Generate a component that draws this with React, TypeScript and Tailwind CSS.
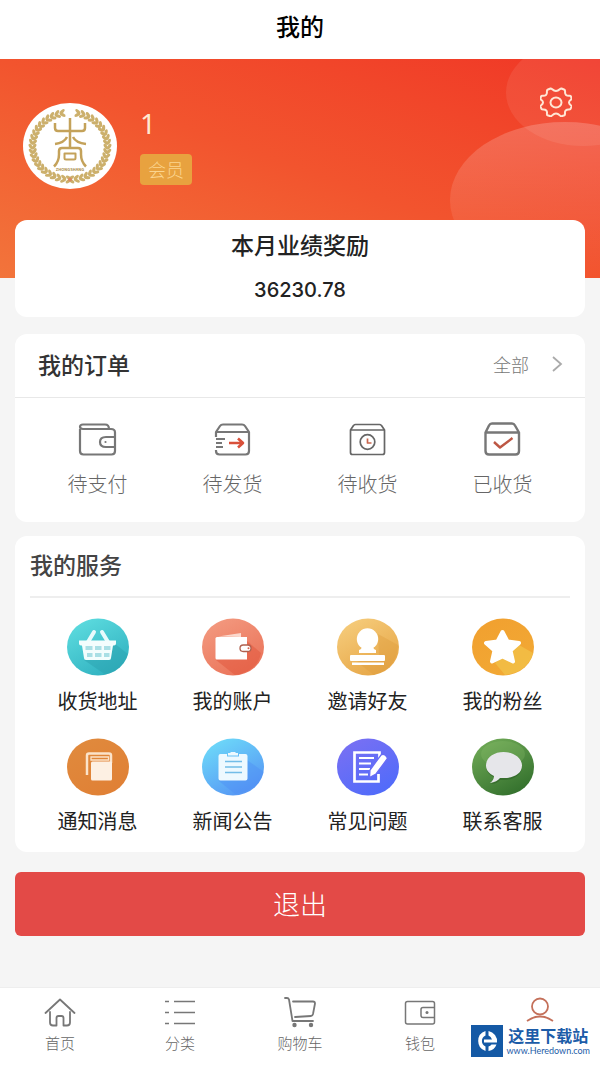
import React from 'react';

interface Entry {
  label: string;
  icon: React.ReactNode;
}

// The round service badges share one slightly flattened disc
const Badge = ({ id, from, to, children }: { id: string; from: string; to: string; children: React.ReactNode }) => (
  <svg viewBox="0 0 64 60" className="w-16 h-[60px]" aria-hidden="true">
    <defs>
      <linearGradient id={id} x1="0.15" y1="0" x2="0.75" y2="1">
        <stop offset="0" stopColor={from} />
        <stop offset="1" stopColor={to} />
      </linearGradient>
      <clipPath id={`${id}-disc`}>
        <ellipse cx="32" cy="30" rx="31" ry="28.5" />
      </clipPath>
    </defs>
    <ellipse cx="32" cy="30" rx="31" ry="28.5" fill={`url(#${id})`} />
    <g clipPath={`url(#${id}-disc)`}>{children}</g>
  </svg>
);

const orders: Entry[] = [
  {
    label: '待支付',
    icon: (
      <svg viewBox="0 0 40 36" className="w-10 h-9" fill="none" stroke="#777" strokeWidth="2.2" strokeLinejoin="round">
        <path d="M2 7v22q0 3.500 3.500 3.500h28q3.500 0 3.500-3.500V10.500Q37 7 33 7H5Q2 7 2 4.800T5 2.500h22q4 0 4 4.500" />
        <path d="M37 15h-9q-6 0-6 5t6 5h9" />
        <circle cx="27.5" cy="20" r="1.1" fill="#777" stroke="none" />
      </svg>
    ),
  },
  {
    label: '待发货',
    icon: (
      <svg viewBox="0 0 40 36" className="w-10 h-9" fill="none" stroke="#777" strokeWidth="2.2" strokeLinejoin="round">
        <path d="M3 15v-5l4-6q1-1.500 3-1.500h19q2 0 3 1.500l4 6v19q0 3.500-3.500 3.500h-26Q3 32.500 3 29v-1M3 10h33" />
        <path d="M3 17h9M3 21h6M3 25h7" strokeWidth="1.800" />
        <path d="M16 21h13M25 16.500l5 4.500-5 4.500" stroke="#d9503a" strokeWidth="2.600" />
      </svg>
    ),
  },
  {
    label: '待收货',
    icon: (
      <svg viewBox="0 0 40 36" className="w-10 h-9" fill="none" stroke="#666" strokeWidth="1.700" strokeLinejoin="round">
        <path d="M2.500 8l3-4.500q1-1 2-1h24q1 0 2 1l3 4.500v22.500q0 2-2 2h-30q-2 0-2-2zM2.500 8h34" />
        <circle cx="19.5" cy="20" r="7.300" />
        <path d="M19.500 16.500V21h4" stroke="#c9674f" />
      </svg>
    ),
  },
  {
    label: '已收货',
    icon: (
      <svg viewBox="0 0 40 36" className="w-10 h-9" fill="none" stroke="#777" strokeWidth="2.400" strokeLinejoin="round">
        <path d="M2.500 10.500l3.500-7q1-2 3-2h20q2 0 3 2l4 7V29q0 3.500-3.500 3.500H6q-3.500 0-3.500-3.500zM2.500 10.500H36" />
        <path d="M11 20l6 5.500L29.500 16" stroke="#bd5744" strokeWidth="2.400" />
      </svg>
    ),
  },
];

const services: Entry[] = [
  {
    label: '收货地址',
    icon: (
      <Badge id="basket" from="#5edde0" to="#2fb0bf">
        <path d="M48 26l15 12q-4 17-23 20L18 43z" fill="#2a9fae" opacity=".45" />
        <path d="M22 25l6-10M42 25l-6-10" stroke="#e8fbfc" strokeWidth="4" strokeLinecap="round" />
        <path d="M13 23.500h37v3q0 2-2 2h-1l-2 12.500q0 2-2 2H20q-2 0-2-2l-2-12.500h-1q-2 0-2-2z" fill="#f3fdfd" />
        <path d="M19.500 29h7v4h-7zM29 29h6.500v4H29zM38 29h6.500v4H38zM21 36h5.500v4H21zM29 36h6.500v4H29zM38 36h5.500v4H38z" fill="#a9dfe5" />
      </Badge>
    ),
  },
  {
    label: '我的账户',
    icon: (
      <Badge id="account" from="#f39a80" to="#ea7258">
        <path d="M46 24l14 12q-4 19-26 22L15 43z" fill="#e2553b" opacity=".5" />
        <path d="M17 19.500l23-3.500v4z" fill="#fbd9ce" />
        <path d="M16 20h30v22.500H16q-1.500 0-1.500-1.500V21.500Q14.500 20 16 20z" fill="#fff" />
        <rect x="39" y="28" width="11" height="6.500" rx="3.200" fill="#fff" stroke="#b0604e" strokeWidth="1.300" />
        <circle cx="47.5" cy="31.200" r="1" fill="#d0624d" />
      </Badge>
    ),
  },
  {
    label: '邀请好友',
    icon: (
      <Badge id="invite" from="#f6cd7d" to="#e6a545">
        <path d="M42 17l20 11q-1 23-24 30l-17-13 22-7z" fill="#df9d3f" opacity=".4" />
        <circle cx="31.5" cy="22" r="10.700" fill="#fff" />
        <path d="M26 29h11q0 3 3 4v3H23v-3q3-1 3-4z" fill="#fff" />
        <rect x="14" y="38" width="35" height="6" rx="1" fill="#fff" />
        <path d="M16 45.500h32v2.500H16z" fill="#fff" />
      </Badge>
    ),
  },
  {
    label: '我的粉丝',
    icon: (
      <Badge id="fans" from="#f1a02f" to="#f2a935">
        <path d="M48 28l14 8q-5 19-28 22l-10-12z" fill="#f3cc50" opacity=".55" />
        <path d="M31.500 15l5 9.500 11.500 1.500-8.500 7.500L42 44.500l-10.500-5-10.500 5 2.500-11L15 26l11.500-1.500z" fill="#fff" stroke="#fff" strokeWidth="4" strokeLinejoin="round" />
      </Badge>
    ),
  },
  {
    label: '通知消息',
    icon: (
      <Badge id="notice" from="#e08a3d" to="#e08035">
        <path d="M21 38V18.500q0-2 2-2h20q2 0 2 2V26" fill="none" stroke="#fbe3ca" strokeWidth="2.500" />
        <path d="M25 20h17.500v3H25z" fill="none" stroke="#fbe3ca" strokeWidth="1.300" />
        <rect x="25" y="24.500" width="21" height="19" rx="1.500" fill="#fdf0e3" />
      </Badge>
    ),
  },
  {
    label: '新闻公告',
    icon: (
      <Badge id="news" from="#6edcf9" to="#5593f4">
        <path d="M46 23l17 12q-6 19-29 22L18 44z" fill="#4e8cf5" opacity=".4" />
        <path d="M19.500 17H26v2.500h12V17h6.500q2 0 2 2v22.500q0 2-2 2h-25q-2 0-2-2V19q0-2 2-2z" fill="#edf9ff" />
        <path d="M27 16h2l1-1h4l1 1h2v2.500H27z" fill="#edf9ff" />
        <path d="M24 24.500h17M24 30h17M24 35.500h17" stroke="#72bde8" strokeWidth="1.600" />
      </Badge>
    ),
  },
  {
    label: '常见问题',
    icon: (
      <Badge id="faq" from="#7a70f3" to="#4f6bfa">
        <path d="M42.500 37v7.500h-24v-29h25V21" fill="none" stroke="#fff" strokeWidth="2.700" />
        <path d="M23 21h15M23 26.500h12M23 32h11M23 37.500h9" stroke="#fff" strokeWidth="2.200" />
        <path d="M45 18q2-1.500 4 0t2.500 3.500L40 37l-6.500 3.500.5-7.500z" fill="#fff" stroke="#686cf5" strokeWidth="1.300" />
      </Badge>
    ),
  },
  {
    label: '联系客服',
    icon: (
      <Badge id="support" from="#71ab57" to="#326f2c">
        <ellipse cx="32" cy="17" rx="22" ry="13" fill="#8fc470" opacity=".25" />
        <path d="M33 17c10 0 18 5.500 18 13s-8 13-18 13h-4q-3 4-9 4 4-3 3-7c-5-2-8-6-8-10.500C15 22 23 17 33 17z" fill="#244f1f" opacity=".4" />
        <path d="M32.500 15c10 0 18.500 5.500 18.500 13.500S43 41 33 41h-4q-3 4-10 5 4-3 4-7c-5-2.500-8-6-8-10.500C15 20.500 23 15 32.500 15z" fill="#e6e6ea" />
      </Badge>
    ),
  },
];

const tabs: Entry[] = [
  {
    label: '首页',
    icon: (
      <svg viewBox="0 0 32 32" className="w-8 h-8" fill="none" stroke="#777" strokeWidth="1.800" strokeLinejoin="round" strokeLinecap="round">
        <path d="M1.500 17L16 3.500 30.500 17M6 16v10.500q0 3 3 3h3.500V22q0-2 2-2h3q2 0 2 2v7.500H23q3 0 3-3V16" />
      </svg>
    ),
  },
  {
    label: '分类',
    icon: (
      <svg viewBox="0 0 32 32" className="w-8 h-8" fill="none" stroke="#777" strokeWidth="1.600">
        <path d="M1 5.500h4M10 5.500h21M1 16.500h4M10 16.500h21M1 27.500h4M10 27.500h21" />
      </svg>
    ),
  },
  {
    label: '购物车',
    icon: (
      <svg viewBox="0 0 32 32" className="w-8 h-8" fill="none" stroke="#777" strokeWidth="1.800" strokeLinejoin="round" strokeLinecap="round">
        <path d="M1 2h2q1.500 0 2 1.500L8.500 25H29M9 5.500h20q2 0 2 2l-2 10.500q-.5 2-2 2l-16 1" />
        <circle cx="10.5" cy="29" r="1.300" fill="#777" />
        <circle cx="27" cy="29" r="1.300" fill="#777" />
      </svg>
    ),
  },
  {
    label: '钱包',
    icon: (
      <svg viewBox="0 0 32 32" className="w-8 h-8" fill="none" stroke="#777" strokeWidth="1.500">
        <rect x="1.5" y="5.500" width="29" height="22.500" rx="2" />
        <path d="M30.500 11.500H19q-2 0-2 2v6q0 2 2 2h11.500" />
        <circle cx="23" cy="16.500" r="1.500" fill="#777" stroke="none" />
      </svg>
    ),
  },
];

const Emblem = () => (
  <svg viewBox="0 0 94 86" className="w-[94px] h-[86px] shrink-0" role="img" aria-label="头像">
    <ellipse cx="47" cy="43" rx="47" ry="43" fill="#fff" />
    {/* laurel wreath, the two halves meet at the bottom */}
    {Array.from({ length: 44 }, (_, i) => {
      const deg = -80 + (i * 340) / 43;
      const a = (deg * Math.PI) / 180;
      const x = 47 + 37.5 * Math.cos(a);
      const y = 43 + 33.5 * Math.sin(a);
      return (
        <g key={i} transform={`translate(${x} ${y}) rotate(${deg + (i < 22 ? -90 : 90)})`} fill="#ccb06c">
          <ellipse cx="0" cy="-2" rx="3.200" ry="1.600" transform="rotate(-35)" />
          <ellipse cx="0" cy="2" rx="3.200" ry="1.600" transform="rotate(35)" />
        </g>
      );
    })}
    <g fill="none" stroke="#c4a25a" strokeWidth="2.500" strokeLinejoin="round">
      <path d="M47 15v29M32 20v5q0 3 3 3h24q3 0 3-3v-5" />
      <path d="M44 34q-3 6-12 7M50 34q3 6 13 7" />
      <path d="M31 63.500q5-5 5-12V48q0-3 3-3h16q3 0 3 3v3.500q0 7 5 12" />
      <path d="M41.500 50.500h11V55q0 1.500-1.500 1.500h-8q-1.500 0-1.500-1.500z" strokeWidth="2" />
    </g>
    <text x="47" y="67.500" textAnchor="middle" fontSize="4" fontWeight="700" fill="#a98b4a">ZHONGSHANG</text>
    <circle cx="47" cy="76.5" r="2" fill="#d98b62" />
  </svg>
);

const Gear = () => (
  <svg viewBox="0 0 32 30" className="w-8 h-[30px]" fill="none" stroke="#ffe6d4" strokeWidth="2" strokeLinejoin="round">
    <path d="M10.500 1.500C12 1 12.500 4 16 4s4-3 5.500-2.500l3 1.200c1.500.8-.5 3.500 1.500 5.300s4.500 0 5 1.500l.5 2c.3 1.500-2.500 1.500-2.500 4s2.800 2.500 2.500 4l-1 2.500c-.8 1.300-3-.2-4.800 1.500s.2 4-1.200 4.800l-3 1c-1.500.4-2-2.800-5.500-2.800s-4 3.200-5.500 2.800l-3-1C6 27.500 8 25.200 6.300 23.500S2.300 23.300 1.500 22l-1-2.500c-.3-1.500 2.500-1.500 2.500-4s-2.800-2.500-2.500-4l.5-2C1.500 8 4 9.800 6 8s0-4.500 1.500-5.300z" />
    <ellipse cx="16" cy="15.500" rx="5.500" ry="5" />
  </svg>
);

const App = () => {
  return (
    <div className="min-h-screen flex flex-col bg-[#f5f5f5] font-['Noto_Sans_CJK_SC',sans-serif]">
      <header className="bg-white pt-2 pb-4 text-center">
        <h1 className="text-2xl leading-[35px] font-medium text-black">我的</h1>
      </header>

      {/* Profile banner */}
      <section className="relative overflow-hidden h-[219px] bg-linear-to-tr from-[#f2743b] via-[#f2542e] to-[#f03626]">
        <div className="absolute -top-5 -right-[60px] w-[154px] h-[107px] rounded-[50%] bg-white/8" />
        <div className="absolute top-[63px] -right-20 w-[230px] h-[156px] rounded-[50%] bg-linear-to-b from-white/20 to-white/0" />
        <div className="relative flex items-start pl-[23px] pr-7 pt-7">
          <div className="pt-4">
            <Emblem />
          </div>
          <div className="ml-[23px] pt-4 flex-1 flex flex-col items-start">
            <span className="text-[28px] leading-10 text-[#ffe9d2] font-['Noto_Sans',sans-serif]">1</span>
            <span className="mt-[11px] px-2 rounded-sm bg-[#e8a23f] text-lg leading-[31px] font-light text-[#fbd58f]">会员</span>
          </div>
          <button aria-label="设置">
            <Gear />
          </button>
        </div>
      </section>

      <main className="relative px-[15px] -mt-[58px] pb-5">
        <section className="bg-white rounded-xl h-[97px] pt-2 text-center text-[#222]">
          <h2 className="text-[23px] leading-8 font-medium">本月业绩奖励</h2>
          <p className="mt-3 text-xl leading-9 font-medium font-['Inter',sans-serif]">36230.78</p>
        </section>

        <section className="mt-[17px] bg-white rounded-xl pb-[22px]">
          <div className="flex items-start justify-between h-16 pl-[23px] pr-5 border-b border-[#e8e8e8]">
            <h2 className="text-[23px] leading-[60px] font-medium text-[#333]">我的订单</h2>
            <a href="#orders" className="flex items-center gap-5 text-lg leading-[60px] font-light text-[#777]">
              全部
              <svg viewBox="0 0 14 18" className="w-4 h-[18px]" fill="none" stroke="#aaa" strokeWidth="1.800">
                <path d="M3 2l8 7-8 7" />
              </svg>
            </a>
          </div>
          <div className="grid grid-cols-4 px-[15px] pt-6">
            {orders.map((item) => (
              <button key={item.label} className="flex flex-col items-center gap-2.5">
                {item.icon}
                <span className="text-xl leading-8 font-light text-[#666]">{item.label}</span>
              </button>
            ))}
          </div>
        </section>

        <section className="mt-3.5 px-[15px] pb-[15px] bg-white rounded-xl">
          <h2 className="h-[62px] leading-[57px] text-[23px] font-medium text-[#444] border-b-2 border-[#eee]">我的服务</h2>
          <div className="grid grid-cols-4 pt-[19px] gap-y-5">
            {services.map((item) => (
              <button key={item.label} className="flex flex-col items-center gap-2">
                {item.icon}
                <span className="text-xl leading-8 text-[#222]">{item.label}</span>
              </button>
            ))}
          </div>
        </section>

        <button className="mt-5 w-full rounded-md bg-[#e34a47] text-[27px] leading-[64px] font-light text-white">
          退出
        </button>
      </main>

      <nav className="relative mt-auto h-20 grid grid-cols-5 bg-white border-t border-[#eee]">
        {tabs.map((tab) => (
          <a key={tab.label} href="#" className="flex flex-col items-center pt-2 gap-[3px] text-[15px] leading-6 font-light text-[#666]">
            {tab.icon}
            {tab.label}
          </a>
        ))}
        <a href="#" aria-label="我的" className="flex flex-col items-center pt-2">
          <svg viewBox="0 0 32 32" className="w-8 h-8" fill="none" stroke="#c4705a" strokeWidth="1.800">
            <circle cx="16" cy="10.5" r="8" />
            <path d="M3 25q13-9 26 0" />
          </svg>
        </a>

        {/* Site stamp */}
        <div className="absolute right-2.5 bottom-2.5 flex items-center gap-1 text-[#1c5ca8]">
          <svg viewBox="0 0 32 32" className="w-8 h-8">
            <rect width="32" height="32" fill="#1459a5" />
            <path d="M14.500 6v4.500a6 6 0 0 0 0 11V26a10.500 10.500 0 0 1 0-20z" fill="#fff" />
            <path d="M17.500 6a10.500 10.500 0 0 1 8.500 11.500H13v-3h8q-1-3-3.500-4zM17.500 26v-4.500q2-.7 3-2h5q-2 5.500-8 6.500z" fill="#fff" />
          </svg>
          <div className="flex flex-col items-center">
            <span className="text-base leading-5 font-bold">这里下载站</span>
            <span className="text-[9px] leading-3 font-['Lato',sans-serif]">www.Heredown.com</span>
          </div>
        </div>
      </nav>
    </div>
  );
};

export default App;
